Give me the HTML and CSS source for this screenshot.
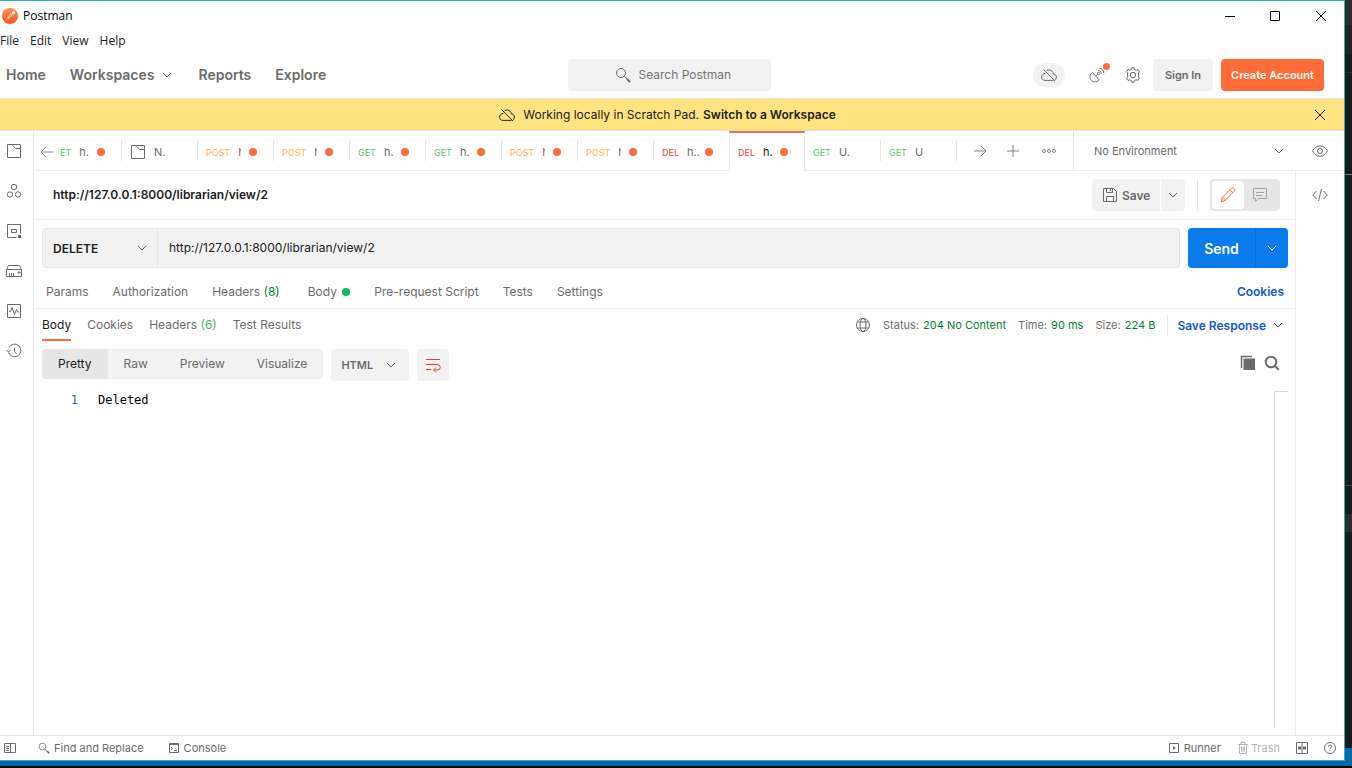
FILE: index.html
```html
<!DOCTYPE html>
<html lang="en">
<head>
<meta charset="utf-8">
<meta name="viewport" content="width=device-width, initial-scale=1">
<title>Postman</title>
<link rel="stylesheet" href="styles.css">
</head>
<body>
<svg class="defs" aria-hidden="true">
  <defs>
    <linearGradient id="logo-fill" x1="0" y1="0" x2="0" y2="1"><stop offset="0" stop-color="#ff8e4a"/><stop offset="1" stop-color="#fb5128"/></linearGradient>
    <symbol id="chevron" viewBox="0 0 10 10"><path d="M1 3l4 4 4-4"/></symbol>
    <symbol id="folder" viewBox="0 0 16 16"><path d="M1.500 1.500h13v13h-13zM6 1.500l3.500 4h5"/></symbol>
    <symbol id="cloud-off" viewBox="0 0 16 16"><path d="M4.500 6.200C1.800 6.600.6 8.400.6 10.200c0 1.900 1.400 3.200 3.300 3.200h8.600M5.600 3.800c3-1.800 6.300-.3 6.700 3 2.100.3 3.100 1.700 3.100 3.300 0 1.200-.5 2.200-1.500 2.800M2.500 2.500l11.500 11.500"/></symbol>
    <symbol id="cross" viewBox="0 0 12 12"><path d="M1 1l10 10M11 1L1 11"/></symbol>
    <symbol id="loupe" viewBox="0 0 16 16"><circle cx="6" cy="6" r="4.500"/><path d="M9.400 9.400l5 5"/><path d="M12 12l3 3" stroke-width="2"/></symbol>
  </defs>
</svg>
<div class="desktop">
  <div class="window">
    <div class="titlebar">
      <div class="app-name">
        <svg class="logo" viewBox="0 0 16 16"><circle cx="8" cy="8" r="8" fill="url(#logo-fill)"/><path d="M4 12.300l1.500-3 4-4 1.200 1.200-4 4z" fill="#fff" opacity=".85"/><circle cx="11.500" cy="4.700" r="1.600" fill="#fff"/><path d="M5 11l5-5" stroke="#f96a3a" stroke-width=".6"/></svg>
        <span>Postman</span>
      </div>
      <div class="window-controls">
        <button aria-label="Minimize"><svg viewBox="0 0 12 12"><path d="M1 6.500h10"/></svg></button>
        <button aria-label="Maximize"><svg viewBox="0 0 12 12"><path d="M1.500 1.500h9v9h-9z"/></svg></button>
        <button aria-label="Close"><svg viewBox="0 0 12 12"><use href="#cross"/></svg></button>
      </div>
    </div>
    <div class="menubar"><button>File</button><button>Edit</button><button>View</button><button>Help</button></div>

    <header class="header">
      <nav class="main-nav">
        <a href="#">Home</a>
        <a href="#">Workspaces <svg class="chev"><use href="#chevron"/></svg></a>
        <a href="#">Reports</a>
        <a href="#">Explore</a>
      </nav>
      <label class="search"><svg class="ic16"><use href="#loupe"/></svg><input type="text" placeholder="Search Postman" aria-label="Search Postman"></label>
      <div class="actions">
        <button class="pill" aria-label="Offline"><svg class="ic16"><use href="#cloud-off"/></svg></button>
        <button class="icon-btn notify" aria-label="Capture requests"><svg class="ic16" viewBox="0 0 16 16"><path d="M3.400 5.300C.6 7.300.2 11 2.500 13.500c2 2 5.600 2 7.500-.7zM6.800 9l2-2"/><circle cx="9.500" cy="6.500" r="1.200"/><path d="M9.500 3.600c1.700 0 2.900 1.200 2.900 2.900M10 1.200c2.600.1 4.700 2.100 4.800 4.800"/></svg><span class="badge"></span></button>
        <button class="icon-btn" aria-label="Settings"><svg class="ic16" viewBox="0 0 16 16"><circle cx="8" cy="8" r="2.700"/><path d="M6.500 2.400L7 .7h2l.5 1.700 1.700.8 1.800-.6 1.300 2-.9 1.500v3.800l.9 1.500-1.300 2-1.800-.6-1.700.8L9 15.300H7l-.5-1.700-1.700-.8-1.800.6-1.300-2 .9-1.500V6.100l-.9-1.500 1.300-2 1.800.6z"/></svg></button>
        <button class="sign-in">Sign In</button>
        <button class="create">Create Account</button>
      </div>
    </header>

    <div class="banner">
      <p><svg class="ic16"><use href="#cloud-off"/></svg><span>Working locally in Scratch Pad.</span><a href="#">Switch to a Workspace</a></p>
      <button aria-label="Dismiss"><svg class="ic12"><use href="#cross"/></svg></button>
    </div>

    <div class="workspace">
      <aside class="sidebar">
        <button aria-label="Collections"><svg class="ic16"><use href="#folder"/></svg></button>
        <button aria-label="APIs"><svg class="ic16" viewBox="0 0 16 16"><circle cx="8" cy="4" r="2.700"/><circle cx="4" cy="11.500" r="2.700"/><circle cx="12" cy="11.500" r="2.700"/></svg></button>
        <button aria-label="Environments"><svg class="ic16" viewBox="0 0 16 16"><path d="M10.500 14.500h-9v-13h13v9M5.500 6.500h5v3h-5z"/><path d="M12 12h3v3h-3z" fill="currentColor" stroke="none"/></svg></button>
        <button aria-label="Mock servers"><svg class="ic16" viewBox="0 0 16 16"><path d="M.5 6.500h15v7H.5zM.5 6.500l2-4h11l2 4M3.500 10v3M5.500 10v3M7.500 10v3"/><path d="M12 9h2v1h-2z"/></svg></button>
        <button aria-label="Monitors"><svg class="ic16" viewBox="0 0 16 16"><path d="M1.500 1.500h13v13h-13zM3 8.500h1.500l1.500-4 2.500 7 2-5 1 2.500H13"/></svg></button>
        <button aria-label="History"><svg class="ic16" viewBox="0 0 16 16"><path d="M2.500 9a6.300 6.300 0 1 0 .5-4.500M.5 7l2 2 2-2M8.500 4.500V9l2 1.500"/></svg></button>
      </aside>

      <div class="main">
        <div class="topbar">
          <div class="tabs" role="tablist">
            <button class="tab first" role="tab"><svg class="ic14" viewBox="0 0 14 14"><path d="M13 7H1M6 2L1 7l5 5"/></svg><b class="get">ET</b><span class="name">h.</span><i class="dot"></i></button>
            <button class="tab" role="tab"><svg class="ic16"><use href="#folder"/></svg><span class="name">N.</span></button>
            <button class="tab" role="tab"><b class="post">POST</b><span class="name">h</span><i class="dot"></i></button>
            <button class="tab" role="tab"><b class="post">POST</b><span class="name">h</span><i class="dot"></i></button>
            <button class="tab" role="tab"><b class="get">GET</b><span class="name">h.</span><i class="dot"></i></button>
            <button class="tab" role="tab"><b class="get">GET</b><span class="name">h.</span><i class="dot"></i></button>
            <button class="tab" role="tab"><b class="post">POST</b><span class="name">h</span><i class="dot"></i></button>
            <button class="tab" role="tab"><b class="post">POST</b><span class="name">h</span><i class="dot"></i></button>
            <button class="tab" role="tab"><b class="del">DEL</b><span class="name">h..</span><i class="dot"></i></button>
            <button class="tab active" role="tab" aria-selected="true"><b class="del">DEL</b><span class="name">h.</span><i class="dot"></i></button>
            <button class="tab" role="tab"><b class="get">GET</b><span class="name">U.</span></button>
            <button class="tab" role="tab"><b class="get">GET</b><span class="name">U</span></button>
          </div>
          <div class="tab-tools">
            <button aria-label="Scroll right"><svg class="ic14" viewBox="0 0 14 14"><path d="M1 7h12M8 2l5 5-5 5"/></svg></button>
            <button aria-label="New tab"><svg class="ic14" viewBox="0 0 14 14"><path d="M1 7h12M7 1v12"/></svg></button>
            <button aria-label="More"><svg class="ic14" viewBox="0 0 14 14"><circle cx="2" cy="7" r="1.500"/><circle cx="7" cy="7" r="1.500"/><circle cx="12" cy="7" r="1.500"/></svg></button>
          </div>
          <div class="env">
            <select aria-label="Environment"><option>No Environment</option></select>
            <svg class="chev"><use href="#chevron"/></svg>
          </div>
          <button class="eye" aria-label="Environment quick look"><svg class="ic16" viewBox="0 0 16 16"><path d="M.5 8C2.500 4.500 5 2.800 8 2.800S13.500 4.500 15.500 8c-2 3.500-4.500 5.200-7.500 5.200S2.500 11.500.5 8z"/><circle cx="8" cy="8" r="2.500"/></svg></button>
        </div>

        <div class="content">
          <div class="request">
            <div class="request-head">
              <h1>http://127.0.0.1:8000/librarian/view/2</h1>
              <div class="save-group">
                <button class="save"><svg class="ic16" viewBox="0 0 16 16"><path d="M1.500 1.500h10l3 3v10h-13zM4.500 1.500v4h6v-4M8.500 2v2M4.500 14.500v-5h7v5"/></svg>Save</button>
                <button class="save-more" aria-label="Save options"><svg class="chev"><use href="#chevron"/></svg></button>
              </div>
              <div class="mode">
                <button class="on" aria-label="Build"><svg class="ic16" viewBox="0 0 16 16"><path d="M1.200 14.800l1-4.300L11.300 1.400c.8-.8 2-.6 2.700.1s.9 2 .1 2.800L5.200 13.500zM10 2.800l3 3M2.200 10.500l3 3"/></svg></button>
                <button aria-label="Comments"><svg class="ic16" viewBox="0 0 16 16"><path d="M1.500 1.500h13v10h-8l-3 3v-3h-2zM4 5.500h8M4 8.500h6"/></svg></button>
              </div>
            </div>

            <form class="url-row">
              <div class="url-box">
                <div class="method"><select aria-label="Method"><option>DELETE</option></select><svg class="chev"><use href="#chevron"/></svg></div>
                <input type="text" aria-label="Request URL" value="http://127.0.0.1:8000/librarian/view/2">
              </div>
              <div class="send"><button type="button">Send</button><button type="button" aria-label="Send options"><svg class="chev"><use href="#chevron"/></svg></button></div>
            </form>

            <div class="request-tabs">
              <button>Params</button><button>Authorization</button><button>Headers <em>(8)</em></button><button>Body <i class="ok"></i></button><button>Pre-request Script</button><button>Tests</button><button>Settings</button>
              <a href="#">Cookies</a>
            </div>

            <div class="response-head">
              <div class="response-tabs"><button class="on">Body</button><button>Cookies</button><button>Headers <em>(6)</em></button><button>Test Results</button></div>
              <div class="status">
                <svg class="ic16" viewBox="0 0 16 16"><circle cx="8" cy="8" r="6.500"/><ellipse cx="8" cy="8" rx="3" ry="6.500"/><path d="M2.500 5h11M2.500 11h11"/></svg>
                <span>Status: <em>204 No Content</em></span><span>Time: <em>90 ms</em></span><span>Size: <em>224 B</em></span>
                <button class="save-response">Save Response<svg class="chev"><use href="#chevron"/></svg></button>
              </div>
            </div>

            <div class="viewer-bar">
              <div class="segment"><button class="on">Pretty</button><button>Raw</button><button>Preview</button><button>Visualize</button></div>
              <div class="language"><select aria-label="Language"><option>HTML</option></select><svg class="chev"><use href="#chevron"/></svg></div>
              <button class="wrap" aria-label="Wrap lines"><svg class="ic16" viewBox="0 0 16 16"><path d="M1 2.500h14M1 7.500h11.500a2.700 2.700 0 0 1 0 5.500H9M1 12.500h5M11 10.500L8.500 13l2.500 2.500"/></svg></button>
              <div class="viewer-tools">
                <button aria-label="Copy"><svg class="ic16" viewBox="0 0 16 16"><path d="M1.500 13V1.500H12" stroke-width="1.500"/><path d="M3.500 3.500H15V15H3.500z" fill="currentColor" stroke="none"/></svg></button>
                <button aria-label="Find"><svg class="ic16" viewBox="0 0 16 16"><g stroke-width="2"><circle cx="7" cy="7" r="5.300"/><path d="M10.800 10.800l4 4"/></g></svg></button>
              </div>
            </div>

            <div class="editor"><pre><span class="line-no">1</span><code>Deleted</code></pre><div class="ruler"></div></div>
          </div>
          <aside class="rail"><button aria-label="Code"><svg class="ic16" viewBox="0 0 16 16"><path d="M4.500 4L.7 8l3.800 4M11.500 4l3.800 4-3.800 4M9.500 2l-3 12"/></svg></button></aside>
        </div>
      </div>
    </div>

    <footer class="footer">
      <div class="foot-left">
        <button aria-label="Toggle sidebar"><svg class="ic12" viewBox="0 0 12 12"><path d="M.5 1.500h11v9H.5zM6.500 1.500v9M2 4.500h3M2 6.500h3M2 8.500h3"/></svg></button>
        <button><svg class="ic12"><use href="#loupe"/></svg>Find and Replace</button>
        <button><svg class="ic12" viewBox="0 0 12 12"><path d="M1.500 1.500h9v9h-9zM1 2.500h10M3 5l1.500 1.500L3 8M6 8.500h3"/></svg>Console</button>
      </div>
      <div class="foot-right">
        <button><svg class="ic12" viewBox="0 0 12 12"><path d="M1.500 1.500h9v9h-9z"/><path d="M5 4l3 2-3 2z" fill="currentColor" stroke="none"/></svg>Runner</button>
        <button class="trash"><svg class="ic12" viewBox="0 0 12 12"><path d="M1 2.500h10M4 2V.5h4V2M2.500 2.500v9h7v-9M4.500 4.500v5M6 4.500v5M7.500 4.500v5"/></svg>Trash</button>
        <button aria-label="Two pane view"><svg class="ic12" viewBox="0 0 12 12"><path d="M.5.5h11v11H.5zM6 .5v11"/><path d="M2 4.500h3v3H2zM7 4.500h3v3H7z" fill="currentColor" stroke="none"/></svg></button>
        <button aria-label="Help"><svg class="ic12" viewBox="0 0 12 12"><circle cx="6" cy="6" r="5.500"/><path d="M4.300 4.800c0-2.400 3.500-2.200 3.400 0C7.700 6 6 6 6 7.300M6 8.300v1"/></svg></button>
      </div>
    </footer>
  </div>
  <div class="backdrop-side"></div>
  <div class="backdrop-bottom"></div>
</div>
</body>
</html>
```
FILE: styles.css
```css
* { box-sizing: border-box; }
body { margin: 0; font-family: Inter, "Liberation Sans", sans-serif; font-size: 12px; color: #6b6b6b; background: #1a1a1a; }
button, input, select { font: inherit; color: inherit; background: none; border: 0; padding: 0; margin: 0; outline: 0; }
select { appearance: none; }
a { color: inherit; text-decoration: none; }
em, i { font-style: normal; }
svg { fill: none; stroke: currentColor; flex: none; display: block; }
.defs { position: absolute; width: 0; height: 0; }
.ic16 { width: 16px; height: 16px; }
.ic14 { width: 14px; height: 14px; }
.ic12 { width: 12px; height: 12px; }
.chev { width: 10px; height: 10px; }

.desktop { display: grid; grid-template-columns: minmax(0, 1fr) 7px; grid-template-rows: minmax(0, 1fr) 7px; height: 100vh; }
.window { display: flex; flex-direction: column; min-height: 0; background: #fff; border: solid #1fb5c0; border-width: 1px 1px 1px 0; }
.backdrop-side { background: linear-gradient(#2c2c2c 25px, #222 25px 54px, #1a1a1a 54px 72px, #303030 72px 73px, #1a1a1a 73px 174px, #777 174px 175px, #1a1a1a 175px 485px, #444 485px 486px, #1a1a1a 486px 514px, #2c2c2c 514px 532px, #1a1a1a 532px calc(100% - 13px), #0468ad 0); }
.backdrop-bottom { grid-column: 1 / -1; background: linear-gradient(#0466a8 5px, #0a0a0a 5px); }

.titlebar { display: flex; justify-content: space-between; height: 29px; color: #000; font: 12px "Open Sans", sans-serif; }
.app-name { display: flex; align-items: center; gap: 5px; padding-left: 2px; }
.logo { width: 16px; height: 16px; stroke: none; }
.window-controls { display: flex; }
.window-controls button { width: 45px; display: grid; place-items: center; }
.window-controls button:last-child { width: 47px; }
.window-controls svg { width: 12px; height: 12px; }
.menubar { display: flex; gap: 11px; height: 21px; font: 12px/21px "Open Sans", sans-serif; color: #222; }

.header { display: grid; grid-template-columns: 1fr 203px 1fr; align-items: center; height: 47px; padding-right: 5px; }
.main-nav { display: flex; gap: 24px; padding-left: 6px; font-size: 14px; font-weight: 600; }
.main-nav a { display: flex; align-items: center; gap: 8px; }
.main-nav .chev { margin-right: 2px; }
.search { display: flex; align-items: center; justify-content: center; gap: 8px; height: 32px; padding-left: 8px; border-radius: 4px; background: #f2f2f2; }
.search input { width: 94px; }
.search input::placeholder { color: #757575; opacity: 1; }
.actions { display: flex; justify-content: flex-end; align-items: center; padding-right: 15px; }
.pill { display: grid; place-items: center; width: 32px; height: 24px; border-radius: 12px; background: #f2f2f2; margin-right: 24px; }
.icon-btn { position: relative; margin-right: 20px; }
.icon-btn + .icon-btn { margin-right: 12px; }
.badge { position: absolute; right: -5px; top: -4px; width: 7px; height: 7px; border-radius: 50%; background: #ff6c37; }
.sign-in, .create { height: 32px; border-radius: 4px; font-size: 11px; font-weight: 600; }
.sign-in { width: 60px; background: #f2f2f2; margin-right: 8px; }
.create { width: 103px; background: #ff6c37; color: #fff; }

.banner { display: flex; align-items: center; height: 33px; padding: 0 18px 0 21px; background: #ffe380; border: solid #e6e6e6; border-width: 1px 0; color: #212121; }
.banner p { flex: 1; display: flex; justify-content: center; align-items: center; margin: 0; }
.banner p svg { margin-right: 8px; }
.banner a { font-weight: 600; margin-left: 4px; }

.workspace { flex: 1; display: flex; min-height: 0; }
.sidebar { width: 34px; border-right: 1px solid #ededed; }
.sidebar button { display: flex; align-items: center; width: 100%; height: 40px; padding-left: 6px; }
.main { flex: 1; min-width: 0; display: flex; flex-direction: column; }
.topbar { display: flex; height: 40px; border-bottom: 1px solid #ededed; }
.tabs { display: flex; }
.tab { position: relative; display: flex; align-items: center; width: 76px; height: 39px; padding: 3px 17px 0 8px; text-align: left; }
.tab::after { content: ""; position: absolute; right: 0; top: 9px; width: 1px; height: 21px; background: #e6e6e6; }
.tab b { font-size: 9px; font-weight: 400; margin-right: 8px; opacity: .85; }
.tab .name { flex: 1; min-width: 0; overflow: hidden; font-size: 11px; }
.tab .post + .name { margin-right: 2px; }
.tab.first { width: 88px; padding-left: 6px; }
.tab.first svg { margin-right: 6px; color: #888; }
.tab .ic16 { margin-right: 8px; }
.dot { width: 8px; height: 8px; margin-left: 6px; border-radius: 50%; background: #ff6c37; }
.tab.active { height: 40px; margin-left: -1px; background: #fff; border: 1px solid #e6e6e6; border-top: 2px solid #ff6c37; border-bottom: 0; padding: 1px 16px 1px 8px; }
.tab.active::after { display: none; }
.tab.active .name { color: #212121; }
.get { color: #3fb55f; }
.post { color: #ffa62b; }
.del { color: #eb2013; }
.tab-tools { flex: 1; display: flex; align-items: center; justify-content: flex-end; gap: 20px; padding-right: 17px; color: #808080; }
.tab-tools button:first-child { margin-right: -1px; }
.tab-tools button:nth-child(2) { margin-right: 2px; }
.env { display: flex; align-items: center; width: 223px; border-left: 1px solid #e6e6e6; padding: 0 12px 0 20px; font-size: 11px; }
.env select { flex: 1; }
.eye { display: grid; place-items: center; width: 48px; }

.content { flex: 1; display: flex; min-height: 0; }
.request { flex: 1; min-width: 0; display: flex; flex-direction: column; }
.rail { width: 49px; border-left: 1px solid #ededed; }
.rail button { display: grid; place-items: center; width: 100%; height: 48px; }
.request-head { display: flex; align-items: center; height: 49px; padding: 0 15px 0 19px; border-bottom: 1px solid #ededed; }
.request-head h1 { flex: 1; margin: 0; padding-bottom: 1px; font-size: 12px; font-weight: 600; color: #212121; }
.save-group { display: flex; gap: 1px; height: 32px; padding-right: 12px; }
.save { display: flex; align-items: center; gap: 4px; width: 68px; padding-left: 10px; background: #f2f2f2; border-radius: 4px 0 0 4px; font-weight: 600; }
.save-more { display: grid; place-items: center; width: 24px; background: #f2f2f2; border-radius: 0 4px 4px 0; }
.mode { display: flex; position: relative; width: 70px; height: 32px; margin-left: 13px; padding: 2px; border-radius: 4px; background: #e6e6e6; color: #a6a6a6; }
.mode::before { content: ""; position: absolute; left: -13px; top: 0; width: 1px; height: 32px; background: #e6e6e6; }
.mode button { width: 32px; display: grid; place-items: center; border-radius: 4px; }
.mode .on { background: #fff; color: #ff6c37; }

.url-row { display: flex; gap: 8px; padding: 8px 7px 0 8px; }
.url-box { flex: 1; display: flex; height: 40px; background: #f2f2f2; border: 1px solid #e6e6e6; border-radius: 4px; color: #212121; }
.method { display: flex; align-items: center; width: 115px; padding: 0 10px; border-right: 1px solid #e6e6e6; }
.method select { flex: 1; font-weight: 600; }
.method .chev { color: #6b6b6b; }
.url-box input { flex: 1; padding: 0 0 2px 11px; }
.send { display: flex; width: 100px; border-radius: 4px; background: #097bed; color: #fff; }
.send button:first-child { flex: 1; font-size: 14px; font-weight: 600; border-right: 1px solid #066ed6; }
.send button:last-child { width: 32px; display: grid; place-items: center; }

.request-tabs { display: flex; align-items: center; gap: 24px; height: 41px; padding: 7px 11px 0 12px; border-bottom: 1px solid #ededed; }
.request-tabs em { color: #007f31; margin-right: 4px; }
.request-tabs a { margin-left: auto; }
.request-tabs a, .save-response { color: #1058d2; font-weight: 600; }
.ok { display: inline-block; width: 8px; height: 8px; margin-left: 2px; border-radius: 50%; background: #0cbb52; }
.response-head { display: flex; justify-content: space-between; height: 32px; padding: 0 12px 0 8px; }
.response-tabs { display: flex; gap: 16px; }
.response-tabs button { border-bottom: 2px solid transparent; }
.response-tabs .on { color: #212121; border-color: #ff6c37; }
.response-tabs em { color: #3fb55f; }
.status { display: flex; align-items: center; font-size: 11px; }
.status em { margin-left: 1px; color: #007f31; }
.status span { margin-left: 12px; }
.save-response { display: flex; align-items: center; gap: 7px; height: 20px; margin-left: 12px; padding-left: 9px; border-left: 1px solid #e6e6e6; font-size: 12px; }

.viewer-bar { display: flex; align-items: flex-start; gap: 8px; padding: 8px 15px 0 8px; }
.segment { display: flex; height: 30px; background: #f2f2f2; border-radius: 4px; overflow: hidden; }
.segment button { padding: 0 16px 2px; }
.segment .on { background: #e6e6e6; color: #212121; }
.language { display: flex; align-items: center; width: 78px; height: 32px; padding: 0 13px 0 10px; background: #f2f2f2; border-radius: 4px; font-size: 11px; font-weight: 600; }
.language select { flex: 1; min-width: 0; }
.wrap { display: grid; place-items: center; width: 32px; height: 32px; background: #f2f2f2; border-radius: 4px; color: #d9441c; }
.viewer-tools { display: flex; gap: 8px; margin-left: auto; padding-top: 6px; }
.editor { flex: 1; display: flex; justify-content: space-between; margin: 10px 7px 7px 8px; min-height: 0; }
.editor pre { display: flex; margin: 0; font: 12px/18px "DejaVu Sans Mono", monospace; color: #000; }
.editor code { font: inherit; }
.line-no { width: 36px; margin-right: 20px; text-align: right; color: #237893; }
.ruler { width: 14px; border: solid #d9d9d9; border-width: 1px 0 0 1px; }

.footer { display: flex; justify-content: space-between; align-items: center; height: 25px; padding: 0 8px 0 4px; border-top: 1px solid #e6e6e6; font-size: 11px; }
.foot-left, .foot-right, .footer button { display: flex; align-items: center; }
.footer button { gap: 4px; }
.foot-left { gap: 24px; }
.foot-left button:first-child { margin-right: -2px; }
.foot-right { gap: 16px; }
.footer .trash { gap: 2px; color: #b5b5b5; }
```
